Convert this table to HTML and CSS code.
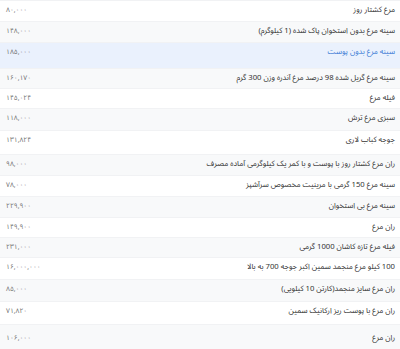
FILE: index.html
```html
<!DOCTYPE html>
<html lang="fa" dir="rtl">
<head>
<meta charset="utf-8">
<title>قیمت مرغ</title>
<link rel="stylesheet" href="styles.css">
</head>
<body>
<ul class="list">
  <li class="row h21"><span class="name">مرغ کشتار روز</span><span class="price">۸۰,۰۰۰</span></li>
  <li class="row h21"><span class="name">سینه مرغ بدون استخوان پاک شده (1 کیلوگرم)</span><span class="price">۱۴۸,۰۰۰</span></li>
  <li class="row h26 active"><span class="name">سینه مرغ بدون پوست</span><span class="price">۱۸۵,۰۰۰</span></li>
  <li class="row h20"><span class="name">سینه مرغ گریل شده 98 درصد مرغ آندره وزن 300 گرم</span><span class="price">۱۶۰,۱۷۰</span></li>
  <li class="row h20"><span class="name">فیله مرغ</span><span class="price">۱۴۵,۰۲۴</span></li>
  <li class="row h22"><span class="name">سبزی مرغ ترش</span><span class="price">۱۱۸,۰۰۰</span></li>
  <li class="row h24"><span class="name">جوجه کباب لاری</span><span class="price">۱۳۱,۸۲۴</span></li>
  <li class="row h21"><span class="name">ران مرغ کشتار روز با پوست و با کمر یک کیلوگرمی آماده مصرف</span><span class="price">۹۸,۰۰۰</span></li>
  <li class="row h21"><span class="name">سینه مرغ 150 گرمی با مرینیت مخصوص سرآشپز</span><span class="price">۷۸,۰۰۰</span></li>
  <li class="row h21"><span class="name">سینه مرغ بی استخوان</span><span class="price">۲۲۹,۹۰۰</span></li>
  <li class="row h20"><span class="name">ران مرغ</span><span class="price">۱۴۹,۹۰۰</span></li>
  <li class="row h20"><span class="name">فیله مرغ تازه کاشان 1000 گرمی</span><span class="price">۲۳۱,۰۰۰</span></li>
  <li class="row h22"><span class="name">100 کیلو مرغ منجمد سمین اکبر جوجه 700 به بالا</span><span class="price">۱۶,۰۰۰,۰۰۰</span></li>
  <li class="row h22"><span class="name">ران مرغ سایز منجمد(کارتن 10 کیلویی)</span><span class="price">۸۵,۰۰۰</span></li>
  <li class="row h23"><span class="name">ران مرغ با پوست ریز ارکانیک سمین</span><span class="price">۷۱,۸۲۰</span></li>
  <li class="row h26 tall"><span class="name">ران مرغ</span><span class="price">۱۰۶,۰۰۰</span></li>
</ul>
</body>
</html>
```

FILE: styles.css
```css
html, body {
  margin: 0;
  padding: 0;
  background: #ffffff;
}

body {
  font-family: "Noto Sans Arabic", "Noto Naskh Arabic", "DejaVu Sans", sans-serif;
  color: #333333;
}

.list {
  list-style: none;
  margin: 0;
  padding: 0;
}

.row {
  display: flex;
  justify-content: space-between;
  align-items: flex-start;
  box-sizing: border-box;
  padding: 3px 5px 0 6px;
  border-top: 1px solid #f1f2f4;
  background: #ffffff;
}

.row:nth-child(even) {
  background: #f8f9fa;
}

.row.active {
  background: #eaf1fd;
}

.row.active .name {
  color: #3a7bd5;
}

.row.tall {
  padding-top: 7px;
}

.h20 { height: 20px; }
.h21 { height: 21px; }
.h22 { height: 22px; }
.h23 { height: 23px; }
.h24 { height: 24px; }
.h26 { height: 26px; }

.name {
  font-size: 7.7px;
  line-height: 12px;
  color: #333333;
  white-space: nowrap;
}

.price {
  font-size: 6.8px;
  line-height: 12px;
  color: #707070;
  direction: ltr;
}
```
